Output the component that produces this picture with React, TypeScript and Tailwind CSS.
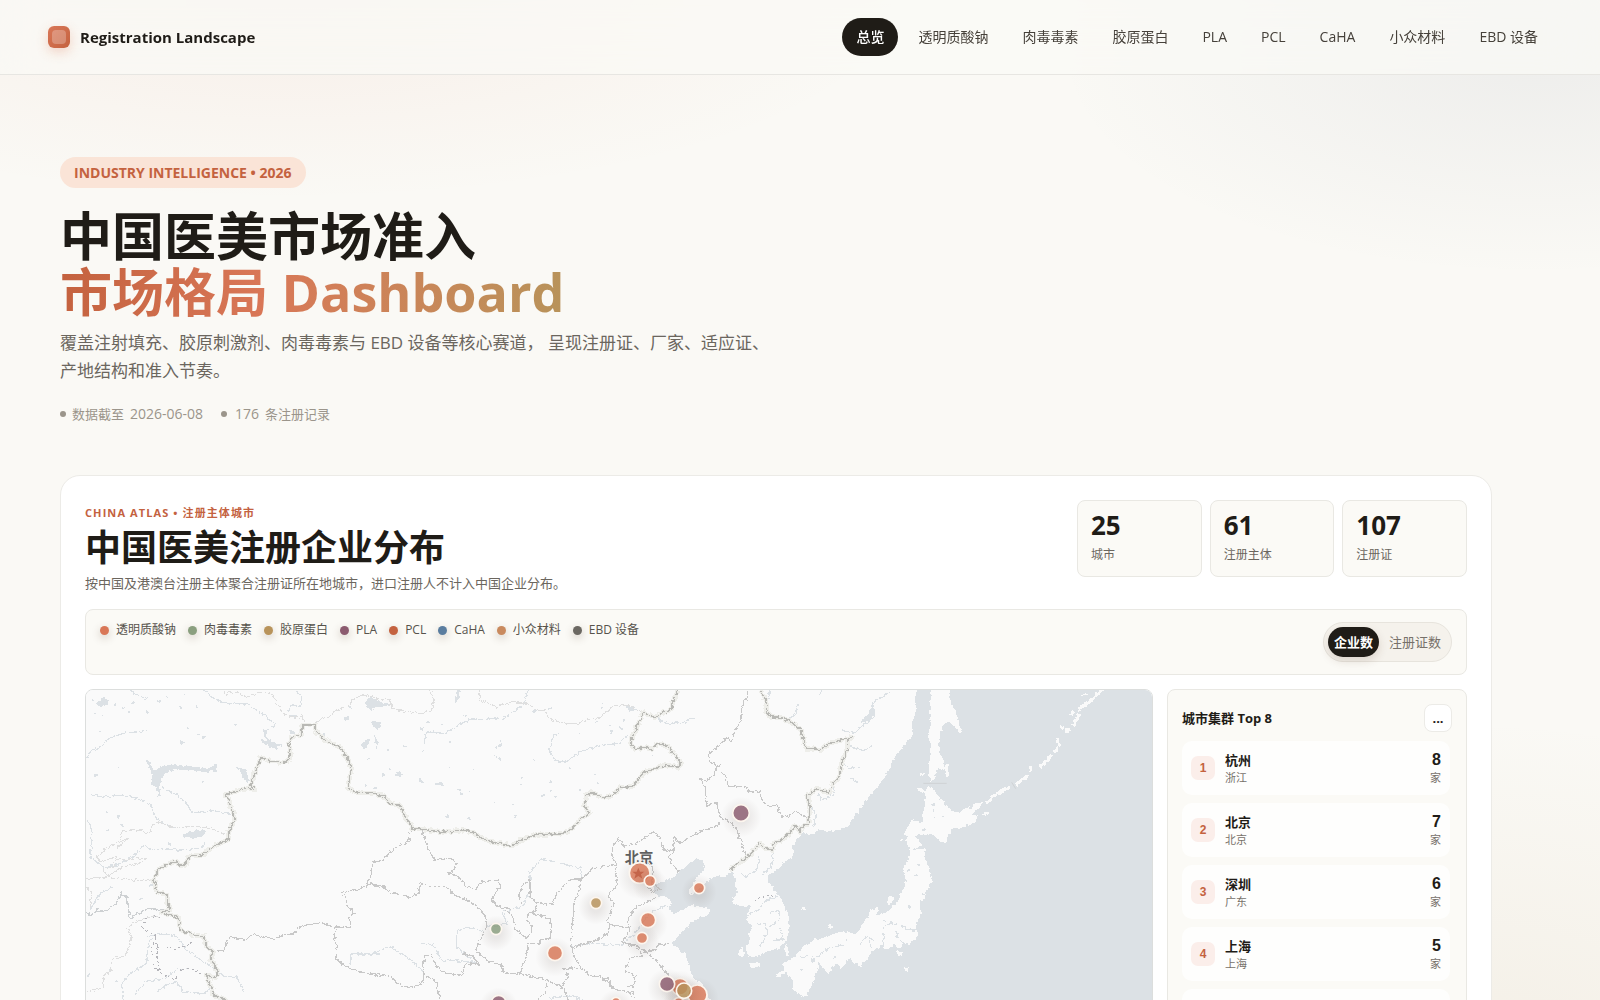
import { useState } from "react";

const NAV = ["总览", "透明质酸钠", "肉毒毒素", "胶原蛋白", "PLA", "PCL", "CaHA", "小众材料", "EBD 设备"];

const STATS = [
  { value: "25", label: "城市" },
  { value: "61", label: "注册主体" },
  { value: "107", label: "注册证" },
];

const LEGEND = [
  { label: "透明质酸钠", dot: "bg-[#d97757]" },
  { label: "肉毒毒素", dot: "bg-[#8a9f7f]" },
  { label: "胶原蛋白", dot: "bg-[#b8935a]" },
  { label: "PLA", dot: "bg-[#8b5a6e]" },
  { label: "PCL", dot: "bg-[#c4623f]" },
  { label: "CaHA", dot: "bg-[#5a7d9f]" },
  { label: "小众材料", dot: "bg-[#c98a5e]" },
  { label: "EBD 设备", dot: "bg-[#6b6862]" },
];

const CITIES = [
  { name: "杭州", region: "浙江", count: 8 },
  { name: "北京", region: "北京", count: 7 },
  { name: "深圳", region: "广东", count: 6 },
  { name: "上海", region: "上海", count: 5 },
  { name: "常州", region: "江苏", count: 4 },
  { name: "成都", region: "四川", count: 4 },
  { name: "济南", region: "山东", count: 3 },
  { name: "西安", region: "陕西", count: 3 },
];

type Sheet = { x: number; lines: string[] };

const NATIONAL: Sheet[] = [
  {
    x: 0,
    lines: [
      "470,1040 450,990 435,958 400,945 395,920 385,905 380,885 405,895 412,885 408,860 392,840 400,815 380,800 372,770 345,765 300,750 298,715 270,705 245,697 270,690 262,665 262,645 230,635 225,610 217,600 230,585 232,570 265,550 290,545 300,557 315,555 328,528 365,525 400,500 445,478 448,450 463,425 462,400 452,385 448,360 435,345 465,335 500,325 525,330 512,315 525,280 542,232 570,243 605,248 628,240 632,220 626,190 635,172 665,165 668,135 705,135 705,150 740,185 780,200 800,230 815,265 808,295 805,325 830,337 885,341 910,348 930,370 962,378 975,410 1000,447 1025,447 1085,457 1145,450 1180,457 1195,470 1240,488 1272,492 1293,500 1320,482 1370,463 1445,462 1475,447 1505,415 1528,400 1512,375 1520,345 1535,337 1560,350 1585,352 1605,340 1620,322 1655,320 1675,300 1688,278 1715,270 1750,257 1770,257 1795,262 1802,250 1785,225 1770,205 1740,190 1725,195 1715,210 1700,200 1665,208 1652,190 1660,165 1690,98 1725,113 1745,100 1775,88 1778,65 1795,30",
    ],
  },
  {
    x: 1560,
    lines: [
      "480,30 498,60 500,95 510,110 545,112 570,125 605,150 610,180 618,205 665,208 690,190 730,178 755,172 742,180 742,205 735,225 725,250 718,290 700,310 688,340 650,325 620,348 630,380 625,430 605,442 600,455 585,437 570,460 545,480 520,490 520,510 495,505 478,490 455,520 430,540 405,555 390,572",
    ],
  },
];

const PROVINCES: Sheet[] = [
  {
    x: 0,
    lines: [
      "410,812 432,810 448,772 500,778 522,760 545,772 585,775 605,765 640,762 655,742 720,728 765,742 815,742 805,715 823,700 800,675 795,645 785,640 840,625 870,612 900,622",
      "860,612 872,590 878,545 900,543",
      "770,742 760,770 770,800 768,835 800,862 850,878 900,890",
    ],
  },
  {
    x: 870,
    lines: [
      "130,447 115,460 118,485 85,497 60,515 40,540 8,548 0,590",
      "0,610 40,620 60,638 120,652 145,640 150,608 185,620 225,618 255,645 290,660 325,680 345,710 350,740",
      "155,447 165,480 175,510 195,540 245,535 258,550 250,575 232,578 265,590 285,615 315,630 335,605 385,600 392,620 375,640 365,660 385,680 420,685",
      "410,690 430,715 435,745 470,775 485,755 485,740 470,720 475,700 495,695 500,670 480,650 480,600 460,610 445,650 455,670",
      "500,665 530,675 550,670 560,640 600,600 635,597 650,585 665,565 720,558 740,550 725,525 728,500 745,477 758,485 760,500 800,490 830,470 850,455 870,470 875,500 900,515",
      "635,597 625,640 610,670 612,700 605,740 605,800 612,830 630,860 660,885 715,897 720,920 750,930 795,940",
      "605,803 650,790 690,775 715,760 720,735 712,720 725,690 732,670 715,645 745,610 735,580 740,550",
      "720,735 780,742 775,760 755,785 790,800 820,815 850,810 865,795 900,790",
      "775,740 775,710 800,680 835,665 860,650",
      "485,700 540,715 545,740 540,775 510,780 510,790 472,790 470,830 450,880 400,880 395,855 350,840 320,815 325,790 350,740",
      "0,880 60,888 95,920 130,922 160,905 160,870 163,830 185,822 200,860 230,880 275,885 285,855 315,850 330,860 310,830 280,820",
      "165,885 200,905 210,960",
      "450,880 530,900 580,925 595,960",
      "575,865 625,865",
      "580,865 595,885 578,920",
      "530,905 525,940 500,960",
      "830,540 850,570 845,610 870,625 850,640 830,620",
    ],
  },
  {
    x: 1560,
    lines: [
      "448,30 440,55 425,80 422,125 405,150 395,185 385,170 328,220 330,245 350,260 365,250 350,262 345,280 375,280 385,318 435,320 450,335 480,335 485,360 510,380 530,370 545,410 570,408 585,392 610,405 622,415",
      "345,280 320,305 300,295 315,320 320,378 350,368 360,410 395,430 410,450 425,490 437,525",
      "365,420 350,440 300,455 270,470 240,490 220,470 222,515 205,530 215,550 235,575",
      "220,510 190,512 180,475",
      "65,785 115,800 145,820 175,850 200,880 215,900",
      "115,810 130,830 95,830 75,870 105,890 100,920 75,920",
      "0,895 30,905 35,925 80,935 105,955",
      "215,900 225,930 245,950",
    ],
  },
];

const FOREIGN: Sheet[] = [
  {
    x: 0,
    lines: [
      "430,30 440,48 445,35 480,38 490,50 520,45 545,35 580,45 590,70 615,105 660,115 665,100 675,130",
      "705,130 720,118 745,115 770,90 800,82 825,55 860,45 900,58 930,60 935,85 980,95 1025,100 1055,90 1062,60 1050,30",
      "435,465 400,448 360,440 280,442 240,428 215,435 210,460 180,450 130,450 120,480 80,505 50,530 60,545 110,530 100,560 70,565 80,590 170,600 217,600",
      "120,485 145,475 105,510",
      "110,540 200,535 180,550 130,560 75,595 20,597",
      "240,708 190,715 150,735 140,745 155,770 150,800 130,830 95,835 95,870 70,890 70,925 20,935",
      "20,620 35,640 30,680",
    ],
  },
  {
    x: 870,
    lines: [
      "328,30 330,60 380,80 430,65 470,70 500,90 525,92 540,118 575,128 620,132 650,120 690,112 735,75 780,78 820,98",
    ],
  },
];

const RIVERS: Sheet[] = [
  {
    x: 0,
    lines: [
      "20,235 30,215 60,200 85,175 130,160 200,152",
      "150,30 175,50 200,55",
      "370,30 400,55 440,70 500,72 545,100 575,125 585,135 555,150 555,170 580,190 610,200",
      "650,30 665,55 660,80 630,75 625,105 655,110",
      "35,345 80,350 130,345 170,355 210,375 225,410 250,430 285,445",
      "245,320 290,345 320,370 335,398 400,392 450,400",
      "20,420 35,450 35,490 30,530 70,562 110,555 160,530 190,495 220,508 300,510 360,505 375,490",
      "30,690 60,640 100,620",
      "130,960 125,910 150,880 200,850 205,790 215,770",
      "165,945 195,905 250,895 290,870 330,865",
      "200,770 255,760 290,770 320,810 370,845 400,865 430,890 470,890 485,915 490,935",
      "230,940 260,915 290,905 310,935 370,940 390,925",
      "810,855 815,820 850,822 900,822",
    ],
  },
  {
    x: 870,
    lines: [
      "475,30 460,75 400,115 295,120 225,160 170,155 162,188",
      "568,162 550,165 538,215 555,242 590,245 630,215 700,195 750,190 772,165",
      "350,740 410,730 400,695 455,680 480,640 480,575 515,537 580,552 635,565 635,595",
      "0,825 60,800 110,830 160,875",
      "150,790 190,795 215,840 290,845 315,850 260,800 260,755 290,742 345,755",
      "605,800 670,790 750,795 790,765 840,700 890,675",
      "540,955 600,948 640,960",
      "865,115 880,125",
    ],
  },
  {
    x: 1560,
    lines: [
      "170,118 200,130 245,128 285,115",
      "510,30 500,75",
      "595,75 585,100 568,118",
      "668,30 655,45",
      "730,150 760,160 790,135 820,110 815,70 840,55 870,35",
      "750,200 790,212 815,200",
      "730,250 745,265 780,262",
      "750,295 770,305",
      "655,340 665,360 700,345 705,320",
      "635,385 650,405 640,440",
      "480,530 470,570 440,590 425,580",
      "520,515 515,560 490,580",
      "450,700 475,690 500,660 530,650",
      "510,700 540,690 535,720 510,740",
      "470,730 495,730 500,760 480,800",
      "540,745 550,780 520,780",
      "600,832 650,828 700,800 740,795",
      "850,745 870,730 890,735",
    ],
  },
  {
    x: 2340,
    lines: ["30,775 32,800", "72,760 70,800", "105,755 118,775 135,790", "120,738 150,750 172,745", "0,790 20,768"],
  },
];

const DOTTED: Sheet[] = [
  {
    x: 0,
    lines: [
      "240,708 200,715 185,745 230,770 215,800 220,860 250,885 285,900 305,868 330,865 375,885",
      "230,790 235,860 245,880",
      "230,800 290,808 340,785",
    ],
  },
  { x: 1560, lines: ["465,662 485,652 525,645"] },
];

const LAKES: string[] = [
  "195,238 210,245 222,272 240,262 255,255 300,255 345,262 380,265 412,252 408,272 375,277 330,270 285,270 262,275 245,292 238,320 240,345 248,352 235,350 230,320 210,315 220,292",
  "456,260 480,262 498,272 508,300 502,310 488,292 480,272",
  "540,180 575,182 595,200 592,210 570,200 548,190",
  "305,465 335,452 380,450 372,468 340,475",
  "50,70 65,52 85,60 85,70 60,82",
  "855,70 865,52 895,60 910,68 935,72 900,82 870,90",
  "870,125 905,130 895,150 880,140",
  "845,190 870,175 865,200 850,208",
  "880,160 892,180 895,212 885,190",
  "1130,30 1143,30 1133,65 1124,65",
  "1640,78 1660,78 1668,90 1650,98",
  "938,285 955,275 972,285 950,288",
  "1010,292 1030,300 1032,310 1018,306",
  "1060,308 1090,310 1094,318 1075,315",
  "1250,202 1260,190 1265,182 1262,200 1240,205",
  "1245,225 1262,238 1258,243",
  "2340,130 2360,105 2375,85 2385,70 2380,105 2365,120",
];

const SPECKS: [number, number, number][] = [
  [40, 60, 4], [45, 97, 4], [70, 105, 3], [105, 70, 4], [132, 82, 3], [160, 65, 4], [148, 95, 3], [200, 95, 3], [235, 62, 4], [262, 50, 3],
  [300, 80, 4], [316, 40, 3], [350, 78, 3], [322, 142, 4], [467, 132, 3], [60, 155, 4], [115, 258, 3], [48, 285, 5], [368, 305, 3], [635, 155, 8],
  [305, 185, 6], [372, 172, 6], [355, 160, 4], [798, 115, 6], [812, 80, 5], [270, 490, 6], [82, 393, 3], [80, 453, 3], [115, 408, 5], [125, 435, 4],
  [212, 615, 5], [185, 655, 4], [860, 315, 5], [885, 322, 5], [25, 885, 5], [90, 868, 4], [110, 902, 4], [865, 235, 4], [730, 165, 5],
  [1025, 145, 6], [1045, 125, 4], [1085, 130, 5], [1110, 185, 4], [1030, 212, 3], [975, 200, 4], [925, 208, 4], [930, 265, 4], [912, 283, 4],
  [1108, 265, 3], [1182, 267, 3], [1140, 328, 5], [1145, 342, 4], [1170, 335, 4], [1102, 408, 5], [1165, 415, 4], [1242, 366, 3], [1300, 372, 3],
  [1305, 407, 3], [1325, 293, 3], [1322, 315, 3], [1362, 240, 3], [1390, 282, 3], [1412, 305, 3], [1412, 332, 3], [1388, 347, 4], [1425, 350, 3],
  [1470, 263, 3], [1500, 330, 4], [1545, 285, 3], [1552, 308, 4], [1595, 155, 4], [1590, 135, 3], [1625, 142, 4], [1632, 120, 4], [1498, 160, 3],
  [1565, 84, 4], [1570, 70, 3], [1552, 125, 3], [1672, 258, 3], [1720, 228, 3], [1668, 40, 3], [1155, 105, 3], [1365, 92, 4], [1410, 82, 4],
  [2560, 373, 4], [2562, 392, 3], [2562, 412, 3], [2590, 408, 3], [2530, 448, 4], [2515, 468, 4], [2573, 452, 2], [2515, 553, 4], [2508, 585, 3],
  [2485, 573, 4], [2488, 676, 4], [2488, 684, 4], [2530, 640, 4], [2412, 722, 3], [2433, 726, 3], [2375, 778, 3], [2405, 800, 4], [2412, 770, 3],
  [2450, 770, 3], [2483, 745, 5], [2500, 750, 5], [2240, 810, 5], [2200, 840, 5], [2165, 870, 4], [2300, 780, 4], [2265, 830, 4],
];

const SEA =
  "2512,20 2505,60 2508,95 2497,125 2495,170 2465,205 2440,240 2425,270 2405,305 2380,335 2355,365 2335,395 2310,430 2280,450 2250,455 2215,450 2200,460 2175,465 2170,455 2150,480 2138,500 2140,530 2115,545 2100,560 2075,580 2060,590 2065,605 2080,625 2100,650 2115,680 2128,710 2128,750 2120,775 2105,800 2080,810 2060,815 2040,825 2015,832 2000,820 1995,800 2008,790 2005,760 2020,740 2000,720 2005,695 2010,675 1995,680 1960,672 1958,655 1975,635 1965,615 1970,600 1955,575 1935,592 1905,587 1885,602 1865,620 1840,640 1828,645 1825,635 1842,610 1850,590 1870,570 1878,550 1850,535 1835,545 1818,560 1800,575 1780,590 1760,600 1735,610 1720,625 1722,640 1740,650 1765,655 1775,670 1765,690 1785,700 1810,690 1835,675 1860,680 1890,688 1885,705 1850,715 1825,740 1795,770 1775,790 1800,810 1815,820 1825,850 1835,885 1850,900 1870,915 1880,940 1890,960 1900,1010 1880,1100 1850,1200 1760,1400 1640,1620 3260,1620 3260,20";

const ISLANDS: string[] = [
  "2555,20 2610,20 2612,70 2630,100 2640,140 2648,160 2640,162 2625,140 2605,125 2590,135 2580,165 2575,200 2585,230 2597,260 2598,250 2608,255 2608,275 2602,298 2592,270 2575,265 2565,290 2555,303 2545,290 2547,250 2552,200 2545,160 2552,130 2550,80",
  "2545,317 2555,322 2575,350 2610,385 2625,397 2645,395 2665,375 2670,390 2685,370 2710,368 2695,385 2675,405 2695,408 2685,425 2650,442 2620,445 2605,462 2598,490 2585,485 2555,462 2525,465 2505,468 2525,495 2510,505 2490,515 2480,490 2475,455 2495,420 2530,430 2528,400 2537,370 2535,335",
  "2495,510 2535,505 2535,540 2550,565 2557,600 2540,635 2535,655 2520,665 2522,700 2508,740 2515,765 2490,795 2470,790 2455,808 2440,790 2430,808 2400,805 2380,810 2360,840 2340,858 2325,850 2310,835 2295,848 2282,870 2275,850 2255,860 2245,885 2230,862 2215,850 2210,880 2195,920 2180,945 2165,955 2150,930 2135,935 2140,900 2125,890 2115,870 2105,850 2140,835 2170,800 2200,780 2240,770 2280,755 2330,760 2345,735 2365,710 2370,690 2395,683 2390,710 2430,690 2455,660 2470,625 2478,600 2470,575 2480,545",
  "2088,890 2095,878 2110,872 2118,862 2112,880 2098,892",
  "2008,855 2020,848 2038,850 2036,860 2018,866",
  "2112,805 2120,795 2128,815 2120,828 2114,820",
  "2242,742 2252,732 2262,740 2250,748",
  "2166,682 2178,682 2178,690 2166,690",
  "2420,665 2430,645 2440,655 2434,672 2424,676",
  "2714,398 2724,395 2722,408 2706,404",
  "1972,825 1985,800 1992,822 1990,832",
  "2514,322 2530,330 2532,340 2518,334",
  "2460,475 2470,478 2466,488",
];

const KURILS = ["2722,368 2745,345 2785,322", "2808,314 2842,288", "2884,256 2912,228", "2852,268 2853,262", "2925,213 2932,205", "2935,192 2934,180", "2960,152 2966,150", "2980,134 2990,118 2994,108", "3000,85 3030,65 3065,30", "3012,44 3018,44", "2945,144 2946,144", "2977,102 2978,100", "2455,818 2460,822", "2476,868 2478,868", "2524,284 2526,284"];

const MARKERS = [
  { cx: 1983, cy: 399, r: 25, fill: "#8b5a6e" },
  { cx: 1679, cy: 579, r: 31, fill: "#d97757" },
  { cx: 1710, cy: 603, r: 17, fill: "#d97757" },
  { cx: 1857, cy: 624, r: 17, fill: "#d97757" },
  { cx: 1548, cy: 669, r: 17, fill: "#b8935a" },
  { cx: 1248, cy: 747, r: 17, fill: "#8a9f7f" },
  { cx: 1425, cy: 819, r: 23, fill: "#d97757" },
  { cx: 1704, cy: 720, r: 23, fill: "#d97757" },
  { cx: 1686, cy: 774, r: 17, fill: "#d97757" },
  { cx: 1256, cy: 968, r: 22, fill: "#8b5a6e" },
  { cx: 1608, cy: 967, r: 15, fill: "#d97757" },
  { cx: 1800, cy: 920, r: 25, fill: "#d97757" },
  { cx: 1852, cy: 944, r: 29, fill: "#d97757" },
  { cx: 1796, cy: 970, r: 17, fill: "#d97757" },
  { cx: 1761, cy: 912, r: 23, fill: "#8b5a6e" },
  { cx: 1812, cy: 932, r: 23, fill: "#b8935a" },
];

function Lines({ sheets, stroke, width, dash }: { sheets: Sheet[]; stroke: string; width: number; dash?: string }) {
  return (
    <g fill="none" stroke={stroke} strokeWidth={width} strokeDasharray={dash} strokeLinejoin="round">
      {sheets.map((s) => (
        <g key={s.x} transform={`translate(${s.x} 0)`}>
          {s.lines.map((p) => (
            <polyline key={p} points={p} />
          ))}
        </g>
      ))}
    </g>
  );
}

function ChinaMap() {
  return (
    <svg viewBox="18 30 3198 1554" preserveAspectRatio="xMidYMin slice" className="block h-full w-full" role="img" aria-label="中国医美注册企业分布">
      <defs>
        <filter id="rough" filterUnits="userSpaceOnUse" x="0" y="0" width="3260" height="1620">
          <feTurbulence type="fractalNoise" baseFrequency="0.09" numOctaves="2" seed="4" result="n" />
          <feDisplacementMap in="SourceGraphic" in2="n" scale="14" xChannelSelector="R" yChannelSelector="G" />
        </filter>
        <radialGradient id="halo">
          <stop offset="0.3" stopColor="#503c32" stopOpacity="0.1" />
          <stop offset="1" stopColor="#503c32" stopOpacity="0" />
        </radialGradient>
      </defs>
      <rect x="0" y="0" width="3260" height="1620" fill="#fafafa" />
      <g filter="url(#rough)" shapeRendering="crispEdges">
        <polygon points={SEA} fill="#dce1e5" />
        {ISLANDS.map((p) => (
          <polygon key={p} points={p} fill="#fafafa" />
        ))}
        {KURILS.map((p) => (
          <polyline key={p} points={p} fill="none" stroke="#fafafa" strokeWidth="10" strokeLinecap="square" />
        ))}
        {LAKES.map((p) => (
          <polygon key={p} points={p} fill="#dce1e5" />
        ))}
        {SPECKS.map(([x, y, r]) => (
          <rect key={`${x}-${y}`} x={x - r} y={y - r / 2} width={r * 2} height={r * 1.5} fill="#dce1e5" />
        ))}
        <Lines sheets={RIVERS} stroke="#dce1e5" width={3.5} />
        <Lines sheets={FOREIGN} stroke="#dfdfdf" width={3} />
        <Lines sheets={DOTTED} stroke="#b5b5ba" width={3} dash="7 6" />
        <polyline points="20,700 35,705 50,690 75,695 105,675 125,640 142,655 150,715 205,685 250,690" fill="none" stroke="#cdd0d2" strokeWidth="4" />
        <Lines sheets={PROVINCES} stroke="#c8c8c8" width={3.5} />
        <Lines sheets={NATIONAL} stroke="#eeeeea" width={14} />
        <Lines sheets={NATIONAL} stroke="#b9b9b5" width={4} />
      </g>
      <path d="M2530 310h70M2795 307l12 19" stroke="#cfd2d4" strokeWidth="3" />
      <text x="1677" y="550" textAnchor="middle" fontSize="43" fontWeight="700" fill="#5f5f5f" stroke="#fafafa" strokeWidth="4" paintOrder="stroke">
        北京
      </text>
      {MARKERS.map((m) => (
        <g key={`${m.cx}-${m.cy}`}>
          <circle cx={m.cx} cy={m.cy + 12} r={m.r + 36} fill="url(#halo)" />
          <circle cx={m.cx} cy={m.cy} r={m.r} fill={m.fill} fillOpacity="0.82" stroke="#fdf6ee" strokeWidth="5" />
        </g>
      ))}
      <path d="M1675 563l5 12h13l-10 8 4 13-12-8-12 8 4-13-10-8h13z" fill="#c4654a" />
    </svg>
  );
}

export default function App() {
  const [active, setActive] = useState("总览");
  const [metric, setMetric] = useState("企业数");

  return (
    <div className="min-h-screen bg-[#faf9f5] bg-[radial-gradient(ellipse_620px_200px_at_18%_0px,rgba(217,119,87,0.08),transparent),radial-gradient(ellipse_480px_225px_at_96%_50px,rgba(90,100,125,0.08),transparent),radial-gradient(ellipse_560px_360px_at_92%_1080px,rgba(184,147,90,0.1),transparent)] font-['Open_Sans','Noto_Sans_CJK_SC',sans-serif] text-[#1f1c17]">
      <header className="sticky top-0 z-10 flex h-[75px] items-center justify-between border-b border-[#e7e6e2] bg-[#faf9f5]/75 px-12 backdrop-blur-xl">
        <a href="#top" className="flex items-center gap-2.5 text-[15px] font-bold leading-6">
          <span className="grid size-[22px] place-items-center rounded-md bg-linear-to-br from-[#d97757] to-[#c4623f] shadow-[0_4px_12px_rgba(217,119,87,0.3)]">
            <span className="size-3.5 rounded bg-white/25" />
          </span>
          Registration Landscape
        </a>
        <nav className="flex items-center gap-1.5">
          {NAV.map((item) => (
            <a
              key={item}
              href={`#${item}`}
              onClick={() => setActive(item)}
              className={`rounded-full px-3.5 py-2 text-sm leading-[22px] whitespace-nowrap ${active === item ? "bg-[#1f1c17] font-medium text-white" : "text-[#46413a]"}`}
            >
              {item}
            </a>
          ))}
        </nav>
      </header>

      <main className="mr-[108px] ml-[60px] pt-[82px] pb-16">
        <section className="flex flex-col items-start">
          <span className="rounded-full bg-[#fae4d7] px-3.5 py-1 text-sm font-bold leading-[23px] text-[#c4623f]">INDUSTRY INTELLIGENCE • 2026</span>
          <h1 className="mt-5 text-[52px] font-bold leading-14">
            中国医美市场准入
            <br />
            <span className="bg-linear-to-r from-[#c4623f] via-[#d97757] via-40% to-[#b8935a] bg-clip-text text-transparent">
              市场格局 Dashboard
            </span>
          </h1>
          <p className="mt-[9px] max-w-[720px] text-[17px] leading-7 text-[#6b665e]">
            覆盖注射填充、胶原刺激剂、肉毒毒素与 EBD 设备等核心赛道， 呈现注册证、厂家、适应证、产地结构和准入节奏。
          </p>
          <div className="mt-[18px] flex gap-[18px] text-[13px] leading-[22px] text-[#9b958b]">
            <span className="flex items-center gap-1.5">
              <span className="size-1.5 rounded-full bg-current" />
              数据截至
              <span className="text-sm leading-[22px]">2026-06-08</span>
            </span>
            <span className="flex items-center gap-1.5">
              <span className="mr-0.5 size-1.5 rounded-full bg-current" />
              <span className="text-sm leading-[22px]">176</span>
              条注册记录
            </span>
          </div>
        </section>

        <section className="mt-[50px] rounded-[20px] border border-[#ecebe7] bg-white p-6">
          <div className="flex items-start justify-between">
            <div className="pt-1">
              <p className="text-[11px] font-bold leading-[18px] tracking-widest text-[#c4623f]">CHINA ATLAS • 注册主体城市</p>
              <h2 className="mt-1.5 text-4xl font-bold leading-10">中国医美注册企业分布</h2>
              <p className="mt-1 text-[13px] leading-[22px] text-[#6b665e]">按中国及港澳台注册主体聚合注册证所在地城市，进口注册人不计入中国企业分布。</p>
            </div>
            <dl className="grid w-[390px] grid-cols-3 gap-2">
              {STATS.map((s) => (
                <div key={s.label} className="flex h-[77px] flex-col-reverse justify-end rounded-lg border border-[#e9e8e3] bg-[#fbfaf6] px-[13px] pt-2">
                  <dt className="mt-1 text-xs leading-5 text-[#6b665e]">{s.label}</dt>
                  <dd className="text-[26px] font-bold leading-8">{s.value}</dd>
                </div>
              ))}
            </dl>
          </div>

          <div className="mt-[15px] flex items-start justify-between rounded-lg border border-[#e9e8e3] bg-[#fbfaf6] px-3.5 py-3">
            <ul className="flex flex-wrap gap-3 text-xs leading-4 text-[#57534c]">
              {LEGEND.map((l) => (
                <li key={l.label} className="flex items-center gap-[7px]">
                  <span className={`size-[9px] rounded-full shadow-[0_3px_8px_rgba(80,50,30,0.25)] ${l.dot}`} />
                  {l.label}
                </li>
              ))}
            </ul>
            <div className="flex h-10 items-center gap-1 rounded-full border border-[#e7e4dd] bg-[#f5f2ec] p-1 text-[13px]">
              {["企业数", "注册证数"].map((m) => (
                <button
                  key={m}
                  type="button"
                  aria-pressed={metric === m}
                  onClick={() => setMetric(m)}
                  className={`h-[30px] rounded-full px-1.5 leading-5 ${metric === m ? "bg-[#1f1c17] font-bold text-white shadow-[0_4px_10px_rgba(80,50,30,0.15)]" : "text-[#77716a]"}`}
                >
                  {m}
                </button>
              ))}
            </div>
          </div>

          <div className="mt-3.5 grid grid-cols-[minmax(0,1fr)_300px] gap-3.5">
            <div className="h-[520px] overflow-hidden rounded-lg border border-[#dcdedd]">
              <ChinaMap />
            </div>
            <aside className="h-[520px] overflow-hidden rounded-lg border border-[#e9e8e3] bg-[#fbfaf6] p-3.5">
              <div className="flex items-center justify-between">
                <h3 className="text-[13px] font-bold leading-5">城市集群 Top 8</h3>
                <button type="button" aria-label="更多" className="size-7 rounded-lg border border-[#ecebe7] bg-white text-[13px] font-bold leading-5">
                  ...
                </button>
              </div>
              <ol className="mt-[9px] mr-0.5 flex flex-col gap-2">
                {CITIES.map((c, i) => (
                  <li key={c.name} className="flex h-[54px] shrink-0 items-center rounded-[10px] bg-[#fefefd] px-[9px]">
                    <span className="grid size-6 place-items-center rounded-[7px] bg-[#fbeeea] font-['Liberation_Sans',sans-serif] text-xs font-bold text-[#c4623f]">{i + 1}</span>
                    <div className="ml-2.5 flex-1">
                      <div className="text-[13px] font-bold leading-5">{c.name}</div>
                      <div className="text-[11px] leading-4 text-[#77716a]">{c.region}</div>
                    </div>
                    <div className="text-right">
                      <div className="font-['Liberation_Sans',sans-serif] text-base font-bold leading-5">{c.count}</div>
                      <div className="text-[11px] leading-4 text-[#77716a]">家</div>
                    </div>
                  </li>
                ))}
              </ol>
            </aside>
          </div>
        </section>
      </main>
    </div>
  );
}
